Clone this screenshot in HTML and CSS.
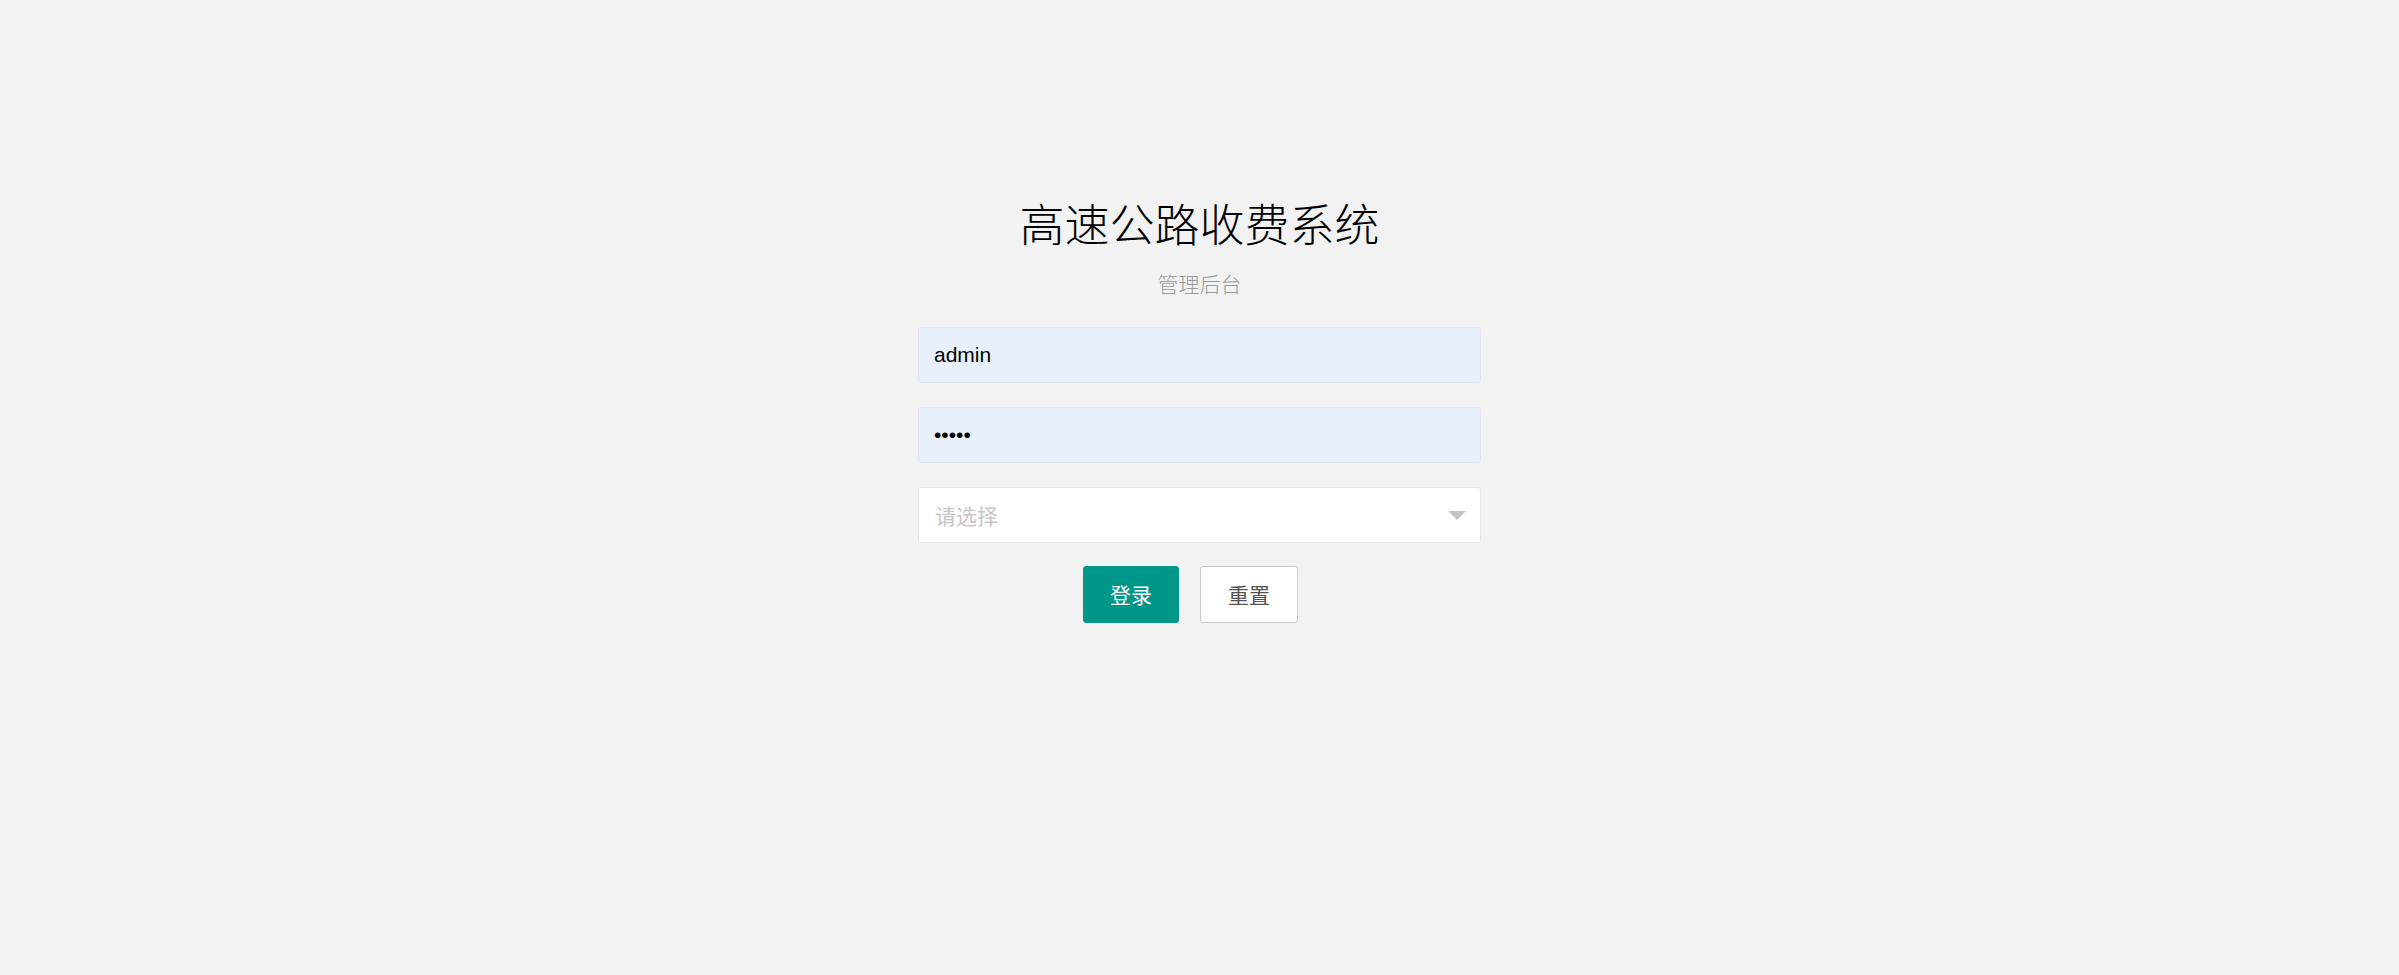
FILE: index.html
```html
<!DOCTYPE html>
<html lang="zh-CN">
<head>
<meta charset="utf-8">
<title>高速公路收费系统 - 管理后台</title>
<link rel="stylesheet" href="styles.css">
</head>
<body>
<main class="login">
  <div class="box">
    <h2 class="title">高速公路收费系统</h2>
    <p class="subtitle">管理后台</p>
    <form class="form" onsubmit="return false;">
      <input class="field autofill" type="text" value="admin">
      <input class="field autofill" type="password" value="admin">
      <div class="field select">
        <span class="placeholder">请选择</span>
        <i class="caret"></i>
      </div>
      <div class="actions">
        <button class="btn btn-primary" type="button">登录</button>
        <button class="btn btn-default" type="button">重置</button>
      </div>
    </form>
  </div>
</main>
</body>
</html>
```
FILE: styles.css
```css
html, body {
  margin: 0;
  padding: 0;
}
body {
  min-height: 975px;
  background: #f2f2f2;
  font-family: "Liberation Sans", "Noto Sans CJK SC", sans-serif;
}
.box {
  width: 563px;
  margin: 0 auto;
  padding-top: 196px;
}
.title {
  margin: 0;
  font-family: "Noto Sans CJK SC", sans-serif;
  font-weight: 300;
  font-size: 45px;
  line-height: 54px;
  color: #000;
  text-align: center;
}
.subtitle {
  margin: 17px 0 0;
  font-family: "Noto Sans CJK SC", sans-serif;
  font-weight: 300;
  font-size: 21px;
  line-height: 32px;
  color: #999;
  text-align: center;
}
.form {
  margin-top: 28px;
  display: flex;
  flex-direction: column;
  gap: 24px;
}
.field {
  box-sizing: border-box;
  width: 100%;
  height: 56px;
  margin: 0;
  padding: 0 15px;
  border: 1px solid #e6e6e6;
  border-radius: 3px;
  background: #fff;
  font-family: "Liberation Sans", "Noto Sans CJK SC", sans-serif;
  font-size: 21px;
  color: #000;
  outline: none;
}
.autofill {
  background: #e8f0fe;
  border-color: #e2e6ec;
}
.select {
  display: flex;
  align-items: center;
  justify-content: space-between;
  padding: 0 14px 0 16px;
}
.placeholder {
  font-family: "Noto Sans CJK SC", sans-serif;
  color: #c6c6c6;
  font-size: 21px;
}
.caret {
  width: 0;
  height: 0;
  border-left: 9px solid transparent;
  border-right: 9px solid transparent;
  border-top: 9px solid #c2c2c2;
}
.actions {
  display: flex;
  justify-content: center;
  gap: 21px;
  padding-right: 18px;
  margin-top: -1px;
}
.btn {
  box-sizing: border-box;
  height: 57px;
  border-radius: 3px;
  font-family: "Noto Sans CJK SC", sans-serif;
  font-size: 21px;
  line-height: 55px;
  cursor: pointer;
}
.btn-primary {
  padding: 0 26px;
  border: 1px solid #009688;
  background: #009688;
  color: #fff;
}
.btn-default {
  padding: 0 27px;
  border: 1px solid #c9c9c9;
  background: #fff;
  color: #555;
}
```
